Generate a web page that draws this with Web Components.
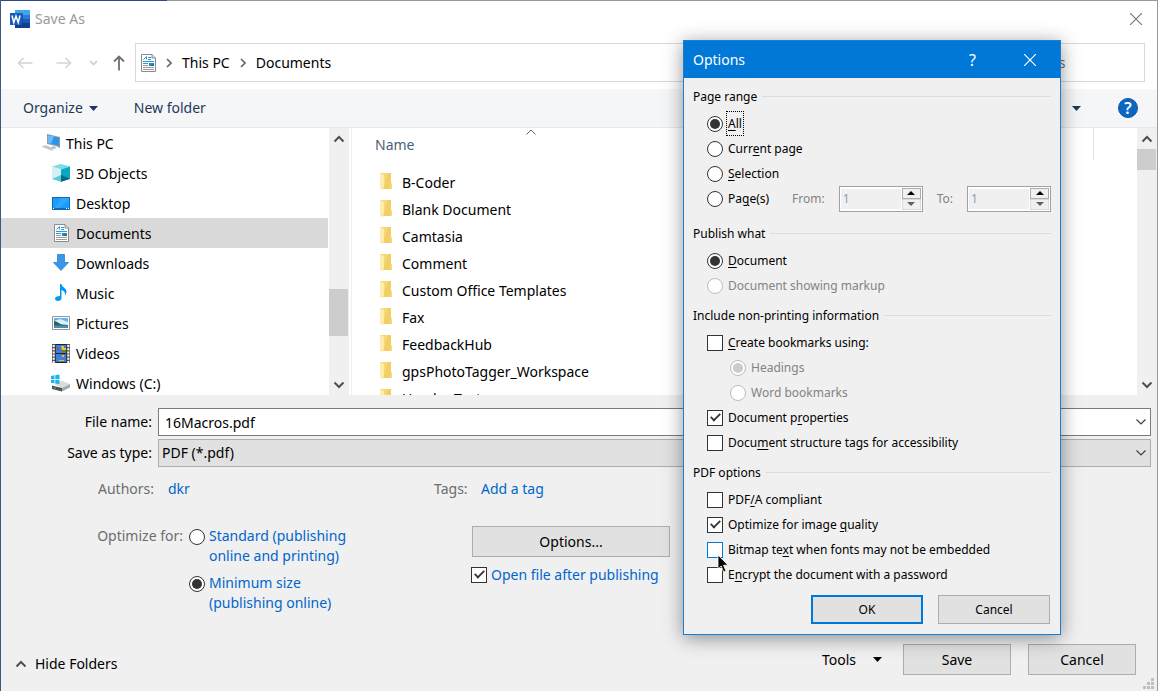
<!DOCTYPE html>
<html lang="en">
<head>
<meta charset="utf-8">
<meta name="viewport" content="width=device-width, initial-scale=1">
<title>Save As</title>
<style>
  body {
    margin: 0;
    font-family: "Noto Sans", "Open Sans", sans-serif;
    font-size: 14px;
    line-height: 20px;
    color: #000;
  }
</style>
</head>
<body>
<save-as-window>
  <options-dialog></options-dialog>
</save-as-window>

<script>
const ICONS = {
  word: `<svg width="20" height="18" viewBox="0 0 20 18">
    <path fill="#41a5ee" d="M5 0h15v5H5z"/><path fill="#2b7cd3" d="M5 5h15v4H5z"/>
    <path fill="#185abd" d="M5 9h15v4H5z"/><path fill="#103f91" d="M5 13h15v5H5z"/>
    <path fill="#0d3a80" d="M5 3h8v13H5z" opacity=".5"/>
    <path fill="#185abd" d="M0 3h12v12H0z"/>
    <path fill="none" stroke="#fff" stroke-width="1.5" d="M2 5.500l1.800 7L6 6l2.200 6.500L10 5.500"/></svg>`,
  back: `<svg width="16" height="12" viewBox="0 0 16 12" fill="none" stroke="#d4d4d4" stroke-width="1.600"><path d="M15.500 6H1.500M6.500 1L1.500 6l5 5"/></svg>`,
  forward: `<svg width="16" height="12" viewBox="0 0 16 12" fill="none" stroke="#d4d4d4" stroke-width="1.600"><path d="M0.500 6h14M9.500 1l5 5-5 5"/></svg>`,
  recent: `<svg width="9" height="6" viewBox="0 0 9 6" fill="none" stroke="#d4d4d4" stroke-width="1.800"><path d="M1 1l3.500 3.500L8 1"/></svg>`,
  up: `<svg width="12" height="16" viewBox="0 0 12 16" fill="none" stroke="#707070" stroke-width="1.800"><path d="M6 15.500V1.500M1 6.500l5-5 5 5"/></svg>`,
  crumb: `<svg width="6" height="10" viewBox="0 0 6 10" fill="none" stroke="#666" stroke-width="1.600"><path d="M1 1l4 4-4 4"/></svg>`,
  caret: `<svg width="9" height="5" viewBox="0 0 9 5"><path fill="currentColor" d="M0 0h9L4.500 5z"/></svg>`,
  close: `<svg width="12" height="12" viewBox="0 0 12 12" fill="none" stroke="currentColor" stroke-width="1.200"><path d="M0 0l12 12M12 0L0 12"/></svg>`,
  chevronUp: `<svg width="12" height="8" viewBox="0 0 12 8" fill="none" stroke="#505050" stroke-width="2"><path d="M1.500 6.500L6 2l4.500 4.500"/></svg>`,
  chevronDown: `<svg width="12" height="8" viewBox="0 0 12 8" fill="none" stroke="#505050" stroke-width="2"><path d="M1.500 1.500L6 6l4.500-4.500"/></svg>`,
  thinUp: `<svg width="10" height="6" viewBox="0 0 10 6" fill="none" stroke="#606060"><path d="M.5 5.500L5 1l4.500 4.500"/></svg>`,
  thinDown: `<svg width="10" height="6" viewBox="0 0 10 6" fill="none" stroke="#404040" stroke-width="1.200"><path d="M.5.500L5 5 9.500.500"/></svg>`,
  pc: `<svg width="20" height="18" viewBox="0 0 20 18">
    <path fill="#8f9aa3" d="M6 0l13 3v11l-4-2-9-2z"/><path fill="#2a96ea" d="M7 1.200l11 2.600v8L7 9z"/>
    <path fill="#69bdf7" d="M7 1.200l6 1.400L10 9.800 7 9z"/><path fill="#aeb5bb" d="M12 12l3 1-1 2-4-1z"/>
    <path fill="#d5d9dc" d="M0 12.500l4-1.500 10 3.500-3.500 2.500z"/><path stroke="#a8afb4" stroke-width=".6" d="M2 12.500l9 3M4 11.800l8 3"/></svg>`,
  cube: `<svg width="18" height="18" viewBox="0 0 18 18">
    <path fill="#7fd9e3" d="M0 2.500L9 0l9 2.500L9 5.500z"/><path fill="#d3f1f4" d="M0 2.500l9 3v12.300L0 15z"/>
    <path fill="#08a7c3" d="M18 2.500l-9 3v12.300L18 15z"/><path fill="#59ccd9" d="M0 15l9-4v6.800z"/>
    <path fill="#046a80" d="M9 11l9 3.800-9 3z"/></svg>`,
  desktop: `<svg width="18" height="13" viewBox="0 0 18 13">
    <path fill="#0d6cb8" d="M0 0h18v13H0z"/><path fill="#1c9cfa" d="M1 1h16v10H1z"/>
    <path fill="#3db0ff" d="M9 1h8v2L7 11H3z" opacity=".5"/><path fill="#fff" d="M1 11h1v1H1zM14 11h1v1h-1zM16 11h1v1h-1z"/></svg>`,
  doc: `<svg width="15" height="18" viewBox="0 0 15 18">
    <path fill="#fff" stroke="#8c8c8c" d="M.5.500h10.500l3.500 3.500v13.500H.5z"/><path fill="#ddd" stroke="#8c8c8c" d="M11 .5V4h3.500"/>
    <path fill="none" stroke="#2f98dc" d="M2.500 5.500l3-3v3M7 3.500h3M7 5.500h3M2 7.500h11M2 9.500h5"/>
    <path fill="#1d8bd1" d="M8 9h5v3H8z"/><path fill="#3c6e50" d="M10 11l3-1v2h-3z"/>
    <path fill="none" stroke="#9b9b9b" d="M2 11.500h5M2 13.500h11M2 15.500h11"/></svg>`,
  download: `<svg width="16" height="18" viewBox="0 0 16 18"><path fill="#3c96e8" stroke="#2b7fd0" stroke-width=".8" d="M4.500.500h7V8.500h4L8 16.500.5 8.500h4z"/></svg>`,
  music: `<svg width="12" height="18" viewBox="0 0 12 18"><path fill="#0099f7" d="M5 0h1.500c0 3 5 4 5 7.500 0 2-1 3-1.500 4 .5-3-1-4.500-3.500-5.500v8c0 2-1.500 3-3.500 3S0 16 0 14.500 2 12 5 12z"/></svg>`,
  pictures: `<svg width="18" height="14" viewBox="0 0 18 14">
    <path fill="#fff" stroke="#969696" d="M.5.500h17v13H.5z"/><path fill="#62b4ef" d="M2 2h14v5H2z"/>
    <path fill="#d9effa" d="M2 5l6-2 8 3v3H2z"/><path fill="#2c6257" d="M2 5c3 0 5 3 8 3.500L16 9v1H2z"/><path fill="#498cc0" d="M2 9.500h14V12H2z"/></svg>`,
  videos: `<svg width="18" height="19" viewBox="0 0 18 19">
    <path fill="#555" d="M0 0h18v19H0z"/><path stroke="#fff" stroke-width="2" stroke-dasharray="2 1.200" d="M1.700 1v18M16.300 1v18"/>
    <path fill="#222" d="M3.500 0h11v19h-11z"/><path fill="#3d7fe0" d="M4 1h10v8H4zM4 10h10v8H4z"/>
    <path fill="#f0c41c" d="M9 2h3v2h2v2h-4zM10 11h2v2h-2zM7 16h5v1H7z"/><path fill="#c8402c" d="M5 4h2v2H5zM10 10h3v1h-2z"/><path fill="#4c8d28" d="M10 6h4v2h-4z"/></svg>`,
  drive: `<svg width="20" height="18" viewBox="0 0 20 18">
    <path fill="#d9dbdc" d="M3 10l8-3 8 3-8 4z"/><path fill="#4f5355" d="M1 11.500l10 2.500v3.500L1 15z"/><path fill="#a7aaac" d="M11 14l8-4v3.500l-8 4z"/>
    <path fill="#3dcf58" d="M3 13.500h2v1H3z"/><path fill="#19b5ec" d="M0 2l3.500-.7V5H0zM4.300 1.200L8.500.500V5H4.300zM0 5.800h3.500v3.500L0 8.700zM4.300 5.800h4.200V10l-4.200-.6z"/></svg>`,
  folder: `<svg width="13" height="18" viewBox="0 0 13 18">
    <path fill="#f8d775" d="M0 0h11v9.500l1 1.500v5H0z"/><path fill="#ecc95f" d="M8 0h3v9.500L10 12v4H3z" opacity=".6"/>
    <path fill="#fdecab" d="M0 0l4 2v12l-1.500 3L0 16z"/></svg>`,
};

// Small inline icon looked up by name
class AppIcon extends HTMLElement {
  constructor() {
    super();
    this.attachShadow({ mode: "open" });
  }

  connectedCallback() {
    this.shadowRoot.innerHTML = `
      <style>
        :host { display: inline-flex; align-items: center; justify-content: center; flex: none; }
        svg { display: block; }
      </style>
      ${ICONS[this.getAttribute("name")] || ""}
    `;
  }
}
customElements.define("app-icon", AppIcon);

class PushButton extends HTMLElement {
  constructor() {
    super();
    this.attachShadow({ mode: "open" });
    this.shadowRoot.innerHTML = `
      <style>
        :host { display: inline-flex; width: 108px; height: 31px; }
        button {
          flex: 1;
          padding: 0;
          border: 1px solid #adadad;
          background: #e1e1e1;
          color: #000;
          font: inherit;
        }
        button:hover { border-color: #0078d7; }
        :host([primary]) button { border: 2px solid #0078d7; }
      </style>
      <button type="button"><slot></slot></button>
    `;
  }
}
customElements.define("push-button", PushButton);

// Radio or tick box with its label
class OptionCheck extends HTMLElement {
  constructor() {
    super();
    this.attachShadow({ mode: "open" });
  }

  connectedCallback() {
    const type = this.getAttribute("type") || "checkbox";
    this.shadowRoot.innerHTML = `
      <style>
        :host { display: flex; }
        label {
          display: flex;
          align-items: center;
          gap: var(--check-gap, 5px);
          min-height: var(--row, 25px);
        }
        :host([top]) label { align-items: flex-start; }
        :host([top]) input { margin-top: 3px; }
        input {
          appearance: none;
          flex: none;
          display: grid;
          place-items: center;
          width: 16px;
          height: 16px;
          margin: 0;
          border: 1px solid #333;
          background: #fff;
        }
        input[type="radio"] { border-radius: 50%; }
        input[type="radio"]:checked::before {
          content: "";
          width: 10px;
          height: 10px;
          border-radius: 50%;
          background: #333;
        }
        input[type="checkbox"]:checked::before {
          content: "";
          width: 9px;
          height: 4px;
          margin-bottom: 3px;
          border: solid #333;
          border-width: 0 0 2px 2px;
          transform: rotate(-45deg) scale(0.9);
        }
        input:disabled { border-color: #bcbcbc; }
        input[type="radio"]:disabled::before { background: #ccc; }
        span { padding-top: var(--text-drop, 0); }
        :host([hot]) input { border-color: #0078d7; }
        :host([disabled]) { color: #838383; }
        :host([focused]) span { outline: 1px dotted #000; outline-offset: 1px; }
      </style>
      <label>
        <input type="${type}" ${this.hasAttribute("checked") ? "checked" : ""} ${this.hasAttribute("disabled") ? "disabled" : ""}>
        <span><slot></slot></span>
      </label>
    `;
    this.input = this.shadowRoot.querySelector("input");
    this.input.addEventListener("change", () => {
      if (type === "radio") this.clearSiblings();
    });
  }

  // radios sit in separate shadow roots, so the browser can't group them
  clearSiblings() {
    const group = this.getAttribute("group");
    this.getRootNode().querySelectorAll(`option-check[group="${group}"]`).forEach((el) => {
      if (el !== this) el.input.checked = false;
    });
  }
}
customElements.define("option-check", OptionCheck);

class OptionGroup extends HTMLElement {
  constructor() {
    super();
    this.attachShadow({ mode: "open" });
  }

  connectedCallback() {
    this.shadowRoot.innerHTML = `
      <style>
        :host { display: block; }
        fieldset { min-width: 0; margin: 0; padding: 0; border: 0; }
        legend {
          display: flex;
          gap: 5px;
          width: 100%;
          padding: 0;
          margin-bottom: 4px;
        }
        legend::after {
          content: "";
          flex: 1;
          height: 1px;
          margin-top: 9px;
          background: #dcdcdc;
        }
        .items { padding-left: 14px; }
      </style>
      <fieldset>
        <legend>${this.getAttribute("label")}</legend>
        <div class="items"><slot></slot></div>
      </fieldset>
    `;
  }
}
customElements.define("option-group", OptionGroup);

class NumberSpinner extends HTMLElement {
  constructor() {
    super();
    this.attachShadow({ mode: "open" });
  }

  connectedCallback() {
    this.shadowRoot.innerHTML = `
      <style>
        :host { display: flex; }
        label { display: flex; align-items: center; gap: 14px; color: #838383; }
        .box {
          display: flex;
          box-sizing: border-box;
          width: 84px;
          height: 26px;
          border: 1px solid #a0a0a8;
          background: #fff;
        }
        input {
          appearance: textfield;
          flex: 1;
          min-width: 0;
          margin: 2px 0 2px 1px;
          padding: 0 2px;
          border: 0;
          background: #f0f0f0;
          color: #8a9fb8;
          font: inherit;
        }
        input::-webkit-inner-spin-button { appearance: none; }
        .buttons { display: flex; flex-direction: column; width: 19px; margin: 1px; }
        button {
          flex: 1;
          display: grid;
          place-items: center;
          padding: 0;
          border: 1px solid #adadad;
          background: #f0f0f0;
          color: #000;
        }
        button + button { border-color: #dadada; color: #606060; }
        svg { display: block; }
      </style>
      <label>${this.getAttribute("label")}
        <span class="box">
          <input type="number" min="1" value="${this.getAttribute("value") || 1}" disabled>
          <span class="buttons">
            <button type="button" aria-label="Increase" tabindex="-1"><svg width="8" height="4" viewBox="0 0 8 4"><path fill="currentColor" d="M0 4l4-4 4 4z"/></svg></button>
            <button type="button" aria-label="Decrease" tabindex="-1"><svg width="8" height="4" viewBox="0 0 8 4"><path fill="currentColor" d="M0 0h8L4 4z"/></svg></button>
          </span>
        </span>
      </label>
    `;
  }
}
customElements.define("number-spinner", NumberSpinner);

class OptionsDialog extends HTMLElement {
  constructor() {
    super();
    this.attachShadow({ mode: "open" });
    this.shadowRoot.innerHTML = `
      <style>
        :host {
          --text-drop: 1px;
          display: block;
          box-sizing: border-box;
          border: 1px solid #1a7fd4;
          background: #f0f0f0;
          box-shadow: 0 3px 18px rgba(0, 0, 0, 0.42);
          font-size: 12px;
        }
        header {
          display: flex;
          align-items: center;
          height: 37px;
          padding: 0 10px 0 9px;
          background: #0078d7;
          color: #fff;
          font-size: 14px;
        }
        h2 { flex: 1; margin: 0; font: inherit; }
        header button {
          width: 57px;
          height: 37px;
          padding: 0;
          border: 0;
          background: none;
          color: inherit;
          font: inherit;
          font-size: 16px;
        }
        header button:last-child { width: 40px; margin-left: 9px; }
        .body {
          display: flex;
          flex-direction: column;
          gap: 8px;
          padding: 9px 9px 10px;
        }
        .publish { margin-top: 5px; }
        .pages { display: flex; align-items: flex-start; }
        .range { display: flex; gap: 14px; margin-left: auto; height: 25px; }
        .nested { padding-left: 23px; }
        footer { display: flex; justify-content: flex-end; gap: 15px; padding-right: 1px; }
        footer push-button { width: 112px; height: 29px; }
        u { text-underline-offset: 2px; }
        .pointer { position: absolute; left: 33px; top: 513px; }
      </style>
      <header>
        <h2>Options</h2>
        <button type="button" aria-label="Help">?</button>
        <button type="button" aria-label="Close"><app-icon name="close"></app-icon></button>
      </header>
      <div class="body">
        <option-group label="Page range">
          <option-check type="radio" group="range" checked focused><u>A</u>ll</option-check>
          <option-check type="radio" group="range">Curr<u>e</u>nt page</option-check>
          <option-check type="radio" group="range"><u>S</u>election</option-check>
          <div class="pages">
            <option-check type="radio" group="range">Pa<u>g</u>e(s)</option-check>
            <div class="range">
              <number-spinner label="From:" value="1"></number-spinner>
              <number-spinner label="To:" value="1"></number-spinner>
            </div>
          </div>
        </option-group>
        <option-group class="publish" label="Publish what">
          <option-check type="radio" group="what" checked><u>D</u>ocument</option-check>
          <option-check type="radio" group="what" disabled>Document showing markup</option-check>
        </option-group>
        <option-group label="Include non-printing information">
          <option-check><u>C</u>reate bookmarks using:</option-check>
          <div class="nested">
            <option-check type="radio" group="marks" checked disabled>Headings</option-check>
            <option-check type="radio" group="marks" disabled>Word bookmarks</option-check>
          </div>
          <option-check checked>Document p<u>r</u>operties</option-check>
          <option-check>Docu<u>m</u>ent structure tags for accessibility</option-check>
        </option-group>
        <option-group label="PDF options">
          <option-check>PDF<u>/</u>A compliant</option-check>
          <option-check checked>Optimize for image <u>q</u>uality</option-check>
          <option-check hot>Bitmap te<u>x</u>t when fonts may not be embedded</option-check>
          <option-check>E<u>n</u>crypt the document with a password</option-check>
        </option-group>
        <footer>
          <push-button primary>OK</push-button>
          <push-button>Cancel</push-button>
        </footer>
      </div>
      <svg class="pointer" width="12" height="20" viewBox="0 0 12 20">
        <path fill="#000" stroke="#fff" stroke-width=".8" d="M1 1v14l3.200-3 2.500 6 2.300-1-2.500-5.800H11z"/>
      </svg>
    `;
  }
}
customElements.define("options-dialog", OptionsDialog);

class ScrollBar extends HTMLElement {
  constructor() {
    super();
    this.attachShadow({ mode: "open" });
    this.shadowRoot.innerHTML = `
      <style>
        :host {
          display: flex;
          flex-direction: column;
          flex: none;
          width: 20px;
          background: #f0f0f0;
        }
        app-icon { width: 19px; height: 21px; }
        .track { flex: 1; }
        .thumb {
          width: 19px;
          height: var(--thumb, 21px);
          margin-top: var(--offset, 0);
          background: #cdcdcd;
        }
      </style>
      <app-icon name="chevronUp"></app-icon>
      <div class="track"><div class="thumb"></div></div>
      <app-icon name="chevronDown"></app-icon>
    `;
  }
}
customElements.define("scroll-bar", ScrollBar);

class TreeItem extends HTMLElement {
  constructor() {
    super();
    this.attachShadow({ mode: "open" });
  }

  connectedCallback() {
    this.shadowRoot.innerHTML = `
      <style>
        :host {
          display: flex;
          align-items: center;
          gap: 5px;
          height: 30px;
          padding-left: 50px;
        }
        :host([root]) { padding-left: 40px; }
        :host([selected]) { background: #d9d9d9; }
        app-icon { width: 20px; }
        span { padding-top: 1px; }
      </style>
      <app-icon name="${this.getAttribute("icon")}"></app-icon>
      <span><slot></slot></span>
    `;
  }
}
customElements.define("tree-item", TreeItem);

class FileRow extends HTMLElement {
  constructor() {
    super();
    this.attachShadow({ mode: "open" });
    this.shadowRoot.innerHTML = `
      <style>
        :host {
          display: flex;
          align-items: center;
          gap: 9px;
          height: 27px;
          padding-left: 28px;
        }
        app-icon { margin-bottom: 2px; }
      </style>
      <app-icon name="folder"></app-icon>
      <span><slot></slot></span>
    `;
  }
}
customElements.define("file-row", FileRow);

class FileBrowser extends HTMLElement {
  constructor() {
    super();
    this.attachShadow({ mode: "open" });
    this.shadowRoot.innerHTML = `
      <style>
        :host {
          display: flex;
          min-height: 0;
          background: #fff;
        }
        nav { flex: none; width: 327px; overflow: hidden; }
        .tree-scroll { --offset: 140px; --thumb: 47px; margin: 0 2px 0 1px; }
        .files {
          flex: 1;
          overflow: hidden;
          border-left: 1px solid #f0f0f0;
        }
        .head { display: flex; height: 32px; margin-bottom: 9px; }
        .name {
          position: relative;
          flex: 1;
          padding: 7px 23px;
          border-right: 1px solid #e3e3e3;
          box-sizing: border-box;
          color: #4c607a;
        }
        .sort { position: absolute; left: 174px; top: 1px; }
        .rest { width: 43px; }
      </style>
      <nav aria-label="Folders">
        <tree-item root icon="pc">This PC</tree-item>
        <tree-item icon="cube">3D Objects</tree-item>
        <tree-item icon="desktop">Desktop</tree-item>
        <tree-item selected icon="doc">Documents</tree-item>
        <tree-item icon="download">Downloads</tree-item>
        <tree-item icon="music">Music</tree-item>
        <tree-item icon="pictures">Pictures</tree-item>
        <tree-item icon="videos">Videos</tree-item>
        <tree-item icon="drive">Windows (C:)</tree-item>
      </nav>
      <scroll-bar class="tree-scroll"></scroll-bar>
      <div class="files">
        <div class="head">
          <div class="name">Name<app-icon class="sort" name="thinUp"></app-icon></div>
          <div class="rest"></div>
        </div>
        <file-row>B-Coder</file-row>
        <file-row>Blank Document</file-row>
        <file-row>Camtasia</file-row>
        <file-row>Comment</file-row>
        <file-row>Custom Office Templates</file-row>
        <file-row>Fax</file-row>
        <file-row>FeedbackHub</file-row>
        <file-row>gpsPhotoTagger_Workspace</file-row>
        <file-row>Header Text</file-row>
      </div>
      <scroll-bar></scroll-bar>
    `;
  }
}
customElements.define("file-browser", FileBrowser);

class NavBar extends HTMLElement {
  constructor() {
    super();
    this.attachShadow({ mode: "open" });
    this.shadowRoot.innerHTML = `
      <style>
        :host {
          display: flex;
          align-items: center;
          padding: 0 12px 7px 0;
        }
        .arrows { display: flex; flex: none; align-items: center; width: 134px; }
        .arrows button { display: flex; padding: 0; border: 0; background: none; }
        .arrows button:nth-child(1) { margin-left: 16px; }
        .arrows button:nth-child(2) { margin-left: 23px; }
        .arrows button:nth-child(3) { margin-left: 17px; }
        .arrows button:nth-child(4) { margin-left: 15px; }
        .box {
          display: flex;
          align-items: center;
          box-sizing: border-box;
          height: 39px;
          border: 1px solid #d9d9d9;
        }
        .address { flex: 1; gap: 10px; padding-left: 5px; margin-right: 16px; }
        .address a { color: inherit; text-decoration: none; }
        .search { width: 240px; padding-left: 36px; }
        input {
          width: 100%;
          padding: 0;
          border: 0;
          outline: 0;
          font: inherit;
        }
        input::placeholder { color: #6d6d6d; }
      </style>
      <div class="arrows">
        <button type="button" aria-label="Back"><app-icon name="back"></app-icon></button>
        <button type="button" aria-label="Forward"><app-icon name="forward"></app-icon></button>
        <button type="button" aria-label="Recent locations"><app-icon name="recent"></app-icon></button>
        <button type="button" aria-label="Up"><app-icon name="up"></app-icon></button>
      </div>
      <div class="box address">
        <app-icon name="doc"></app-icon>
        <app-icon name="crumb"></app-icon>
        <a href="#pc">This PC</a>
        <app-icon name="crumb"></app-icon>
        <a href="#documents">Documents</a>
      </div>
      <div class="box search">
        <input type="search" aria-label="Search" placeholder="Search Documents">
      </div>
    `;
  }
}
customElements.define("nav-bar", NavBar);

class CommandBar extends HTMLElement {
  constructor() {
    super();
    this.attachShadow({ mode: "open" });
    this.shadowRoot.innerHTML = `
      <style>
        :host {
          display: flex;
          align-items: center;
          height: 38px;
          padding: 0 19px 0 22px;
          border-bottom: 1px solid #e6e8eb;
          background: #f5f6f7;
          color: #1e395b;
        }
        button {
          display: flex;
          align-items: center;
          gap: 6px;
          padding: 0;
          border: 0;
          background: none;
          color: inherit;
          font: inherit;
        }
        .new { margin-left: 36px; }
        .view { margin-left: auto; }
        .help {
          justify-content: center;
          width: 20px;
          height: 20px;
          margin-left: 37px;
          border: 1px solid #12559a;
          border-radius: 50%;
          background: #0a68c4;
          color: #fff;
          font-size: 16px;
          font-weight: 600;
        }
      </style>
      <button type="button">Organize <app-icon name="caret"></app-icon></button>
      <button type="button" class="new">New folder</button>
      <button type="button" class="view" aria-label="More options"><app-icon name="caret"></app-icon></button>
      <button type="button" class="help" aria-label="Help">?</button>
    `;
  }
}
customElements.define("command-bar", CommandBar);

class SaveForm extends HTMLElement {
  constructor() {
    super();
    this.attachShadow({ mode: "open" });
    this.shadowRoot.innerHTML = `
      <style>
        :host { display: block; padding: 13px 6px 0 0; }
        .fields {
          display: grid;
          grid-template-columns: 151px 1fr;
          column-gap: 6px;
          row-gap: 3px;
          align-items: center;
        }
        .fields label { text-align: right; }
        .combo {
          display: grid;
          align-items: center;
          height: 28px;
        }
        .combo > * { grid-area: 1 / 1; }
        .combo app-icon { justify-self: end; margin-right: 5px; pointer-events: none; }
        input, select {
          appearance: none;
          box-sizing: border-box;
          width: 100%;
          height: 28px;
          margin: 0;
          border: 1px solid #7a7a7a;
          border-radius: 0;
          background: #fff;
          color: #000;
          font: inherit;
        }
        input { padding: 0 6px; }
        select { padding: 0 3px; border-color: #adadad; background: #e1e1e1; }
        a { color: #0066cc; text-decoration: none; }
        .muted { color: #6d6d6d; }
        .details {
          display: grid;
          grid-template-columns: 153px 252px 33px 1fr;
          column-gap: 14px;
          margin-top: 12px;
        }
        .details .muted { text-align: right; }
        .settings { display: flex; margin-top: 27px; }
        .caption { flex: none; width: 182px; text-align: right; }
        .choices {
          --check-gap: 4px;
          --row: 40px;
          display: flex;
          flex-direction: column;
          gap: 7px;
          width: 160px;
          margin-left: 6px;
          color: #0066cc;
        }
        .actions { margin-left: 122px; color: #0066cc; --check-gap: 4px; }
        .actions push-button { display: flex; width: 198px; margin: 0 0 5px 1px; }
      </style>
      <div class="fields">
        <label for="name">File name:</label>
        <div class="combo">
          <input id="name" type="text" value="16Macros.pdf">
          <app-icon name="thinDown"></app-icon>
        </div>
        <label for="type">Save as type:</label>
        <div class="combo">
          <select id="type"><option>PDF (*.pdf)</option></select>
          <app-icon name="thinDown"></app-icon>
        </div>
      </div>
      <div class="details">
        <span class="muted">Authors:</span><a href="#authors">dkr</a>
        <span class="muted">Tags:</span><a href="#tags">Add a tag</a>
      </div>
      <div class="settings">
        <span class="caption muted">Optimize for:</span>
        <div class="choices">
          <option-check type="radio" group="optimize" top>Standard (publishing<br>online and printing)</option-check>
          <option-check type="radio" group="optimize" top checked>Minimum size<br>(publishing online)</option-check>
        </div>
        <div class="actions">
          <push-button>Options...</push-button>
          <option-check checked>Open file after publishing</option-check>
        </div>
      </div>
    `;
  }
}
customElements.define("save-form", SaveForm);

class SaveFooter extends HTMLElement {
  constructor() {
    super();
    this.attachShadow({ mode: "open" });
    this.shadowRoot.innerHTML = `
      <style>
        :host {
          position: relative;
          display: flex;
          align-items: center;
          padding: 0 21px 16px 14px;
        }
        button {
          display: flex;
          align-items: center;
          gap: 8px;
          padding: 0;
          border: 0;
          background: none;
          color: inherit;
          font: inherit;
        }
        .folders { margin-top: 8px; }
        .tools { gap: 17px; margin: 0 21px 0 auto; }
        push-button + push-button { margin-left: 17px; }
        .grip { position: absolute; right: 3px; bottom: 2px; }
      </style>
      <button type="button" class="folders"><app-icon name="chevronUp"></app-icon>Hide Folders</button>
      <button type="button" class="tools">Tools <app-icon name="caret"></app-icon></button>
      <push-button>Save</push-button>
      <push-button>Cancel</push-button>
      <svg class="grip" width="11" height="11" viewBox="0 0 11 11">
        <path fill="#bfbfbf" d="M8 0h3v3H8zM8 4h3v3H8zM4 4h3v3H4zM8 8h3v3H8zM4 8h3v3H4zM0 8h3v3H0z"/>
      </svg>
    `;
  }
}
customElements.define("save-footer", SaveFooter);

class SaveAsWindow extends HTMLElement {
  constructor() {
    super();
    this.attachShadow({ mode: "open" });
    this.shadowRoot.innerHTML = `
      <style>
        :host {
          position: relative;
          display: flex;
          flex-direction: column;
          box-sizing: border-box;
          height: 100vh;
          min-height: 600px;
          overflow: hidden;
          border-left: 1px solid #3f5685;
          border-right: 1px solid #9a9a9a;
          background: #f0f0f0;
        }
        .edge { height: 1px; background: linear-gradient(90deg, #2b4a85 166px, #999 166px); }
        header {
          display: flex;
          align-items: center;
          gap: 5px;
          height: 36px;
          padding: 0 15px 6px 9px;
          background: #fff;
          color: #999;
        }
        h1 { flex: 1; margin: 0; font: inherit; }
        header button {
          display: flex;
          padding: 0;
          border: 0;
          background: none;
          color: #777;
        }
        nav-bar { background: #fff; }
        file-browser { flex: 1; }
        save-form { margin-bottom: 31px; }
        ::slotted(options-dialog) {
          position: absolute;
          top: 40px;
          right: 96px;
          width: 378px;
        }
      </style>
      <div class="edge"></div>
      <header>
        <app-icon name="word"></app-icon>
        <h1>Save As</h1>
        <button type="button" aria-label="Close"><app-icon name="close"></app-icon></button>
      </header>
      <nav-bar></nav-bar>
      <command-bar></command-bar>
      <file-browser></file-browser>
      <save-form></save-form>
      <save-footer></save-footer>
      <slot></slot>
    `;
  }
}
customElements.define("save-as-window", SaveAsWindow);
</script>
</body>
</html>
